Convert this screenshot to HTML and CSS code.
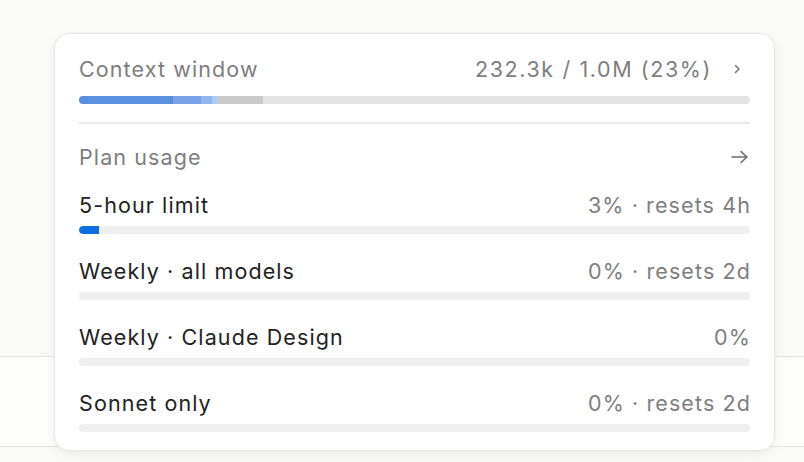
FILE: index.html
```html
<!DOCTYPE html>
<html>
<head>
<meta charset="utf-8">
<link rel="stylesheet" href="styles.css">
</head>
<body>
<div class="stage">
  <div class="backdrop"></div>
  <div class="card">
    <div class="ctx-head">
      <span class="muted">Context window</span>
      <span class="ctx-right"><span class="muted ctx-num">232.3k / 1.0M (23%)</span>
        <svg class="chev" width="10" height="12" viewBox="0 0 10 12"><path d="M3.5 2.5 L7 6 L3.5 9.5" fill="none" stroke="#777" stroke-width="1.5" stroke-linecap="round" stroke-linejoin="round"/></svg>
      </span>
    </div>
    <div class="ctx-bar">
      <span class="seg s1" style="width:94px"></span>
      <span class="seg s2" style="width:28px"></span>
      <span class="seg s3" style="width:11px"></span>
      <span class="seg s4" style="width:6px"></span>
      <span class="seg s5" style="width:45px"></span>
    </div>
    <div class="divider"></div>
    <div class="plan-head">
      <span class="muted">Plan usage</span>
      <svg width="20" height="16" viewBox="0 0 20 16"><path d="M2 8 H17 M11 2.5 L17 8 L11 13.5" fill="none" stroke="#6e6e6e" stroke-width="1.6" stroke-linecap="round" stroke-linejoin="round"/></svg>
    </div>
    <div class="row">
      <div class="row-head"><span class="label">5-hour limit</span><span class="muted">3% · resets 4h</span></div>
      <div class="track"><span class="fill" style="width:3%"></span></div>
    </div>
    <div class="row">
      <div class="row-head"><span class="label">Weekly · all models</span><span class="muted">0% · resets 2d</span></div>
      <div class="track"></div>
    </div>
    <div class="row">
      <div class="row-head"><span class="label">Weekly · Claude Design</span><span class="muted">0%</span></div>
      <div class="track"></div>
    </div>
    <div class="row last">
      <div class="row-head"><span class="label">Sonnet only</span><span class="muted">0% · resets 2d</span></div>
      <div class="track"></div>
    </div>
  </div>
</div>
</body>
</html>
```
FILE: styles.css
```css
* { box-sizing: border-box; }
html, body { margin: 0; padding: 0; }
body {
  background: #fafaf8;
  font-family: Inter, "Noto Sans", sans-serif;
  width: 804px;
  height: 462px;
  overflow: hidden;
}
.stage {
  position: relative;
  width: 804px;
  height: 462px;
  padding: 33px 29px 0 54px;
}
.backdrop {
  position: absolute;
  left: 0;
  right: 0;
  top: 356px;
  height: 91px;
  background: #fdfdfc;
  border-top: 1px solid #e4e4e2;
  border-bottom: 1px solid #e4e4e2;
}
.card {
  position: relative;
  width: 721px;
  background: #fff;
  border: 1px solid #e6e6e4;
  border-radius: 15px;
  box-shadow: 0 4px 14px rgba(0,0,0,0.05), 0 1px 3px rgba(0,0,0,0.03);
  padding: 21px 24px 18px 24px;
}
.muted, .label { font-size: 21.5px; letter-spacing: 1.1px; font-weight: 380; }
.muted { color: #7e7e7e; }
.label { color: #222; }
.ctx-num { letter-spacing: 1.6px; }
.ctx-head, .plan-head, .row-head {
  display: flex;
  justify-content: space-between;
  align-items: center;
  height: 28px;
  line-height: 28px;
}
.row-head .muted { margin-right: -1px; }
.ctx-right { display: flex; align-items: center; gap: 20px; }
.chev { margin-right: 8px; }
.ctx-bar {
  margin-top: 13px;
  height: 8px;
  border-radius: 4px;
  background: #e3e3e3;
  display: flex;
  overflow: hidden;
}
.seg { display: block; height: 100%; }
.s1 { background: #5b8fe0; }
.s2 { background: #78a1e6; }
.s3 { background: #93b6ee; }
.s4 { background: #b3cbf3; }
.s5 { background: #c9c9c9; }
.divider {
  margin-top: 18px;
  height: 2px;
  background: #e8e8e8;
}
.plan-head { margin-top: 19px; }
.row { margin-top: 20px; }
.row + .row { margin-top: 23px; }
.track {
  margin-top: 7px;
  height: 8px;
  border-radius: 4px;
  background: #efefef;
  overflow: hidden;
}
.fill {
  display: block;
  height: 100%;
  background: #0b6fe3;
  border-radius: 4px 0 0 4px;
}
```
